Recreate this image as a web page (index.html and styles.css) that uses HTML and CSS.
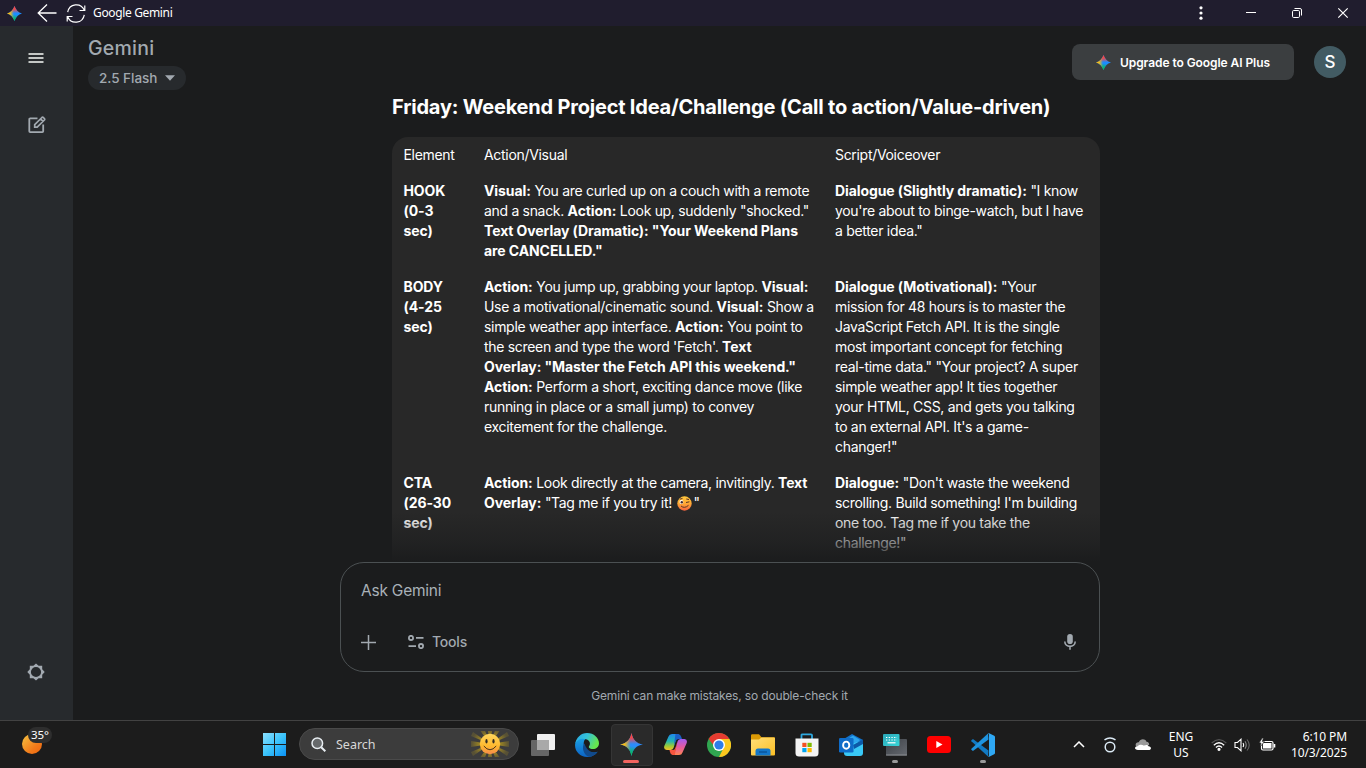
FILE: index.html
```html
<!DOCTYPE html>
<html lang="en">
<head>
<meta charset="utf-8">
<title>Google Gemini</title>
<link rel="stylesheet" href="styles.css">
</head>
<body>
<svg class="defs" width="0" height="0">
  <defs>
    <linearGradient id="spR" x1="0" y1="0" x2="0" y2="1"><stop offset=".2" stop-color="#f94543"/><stop offset=".48" stop-color="#f94543" stop-opacity="0"/></linearGradient>
    <linearGradient id="spY" x1="0" y1="0" x2="1" y2="0"><stop offset=".2" stop-color="#fabc12"/><stop offset=".46" stop-color="#fabc12" stop-opacity="0"/></linearGradient>
    <linearGradient id="spG" x1="0" y1="1" x2=".1" y2="0"><stop offset=".2" stop-color="#08b962"/><stop offset=".48" stop-color="#08b962" stop-opacity="0"/></linearGradient>
    <linearGradient id="win" x1="0" y1="0" x2="1" y2="1"><stop offset="0" stop-color="#8be0ff"/><stop offset=".5" stop-color="#3cc4fb"/><stop offset="1" stop-color="#0a91f5"/></linearGradient>
    <linearGradient id="moon" x1="0" y1="0" x2="1" y2="1"><stop offset="0" stop-color="#f5c542"/><stop offset=".65" stop-color="#f27a1a"/><stop offset="1" stop-color="#ee640c"/></linearGradient>
    <linearGradient id="edA" x1="0" y1="0" x2="1" y2=".4"><stop offset="0" stop-color="#25a7e8"/><stop offset=".5" stop-color="#35c1d8"/><stop offset="1" stop-color="#66e64d"/></linearGradient>
    <linearGradient id="edB" x1="0" y1="0" x2="0" y2="1"><stop offset="0" stop-color="#1ba2e6"/><stop offset="1" stop-color="#0c63c4"/></linearGradient>
    <linearGradient id="coA" x1="0" y1="0" x2="0" y2="1"><stop offset="0" stop-color="#2087ee"/><stop offset=".45" stop-color="#22b6b0"/><stop offset=".75" stop-color="#9ccb35"/><stop offset="1" stop-color="#f5c02a"/></linearGradient>
    <linearGradient id="coB" x1="0" y1="0" x2="0" y2="1"><stop offset="0" stop-color="#a35bf0"/><stop offset=".5" stop-color="#e45a9f"/><stop offset="1" stop-color="#ff8452"/></linearGradient>
    <linearGradient id="fold" x1="0" y1="0" x2="1" y2="1"><stop offset="0" stop-color="#ffdf7a"/><stop offset="1" stop-color="#fcbf24"/></linearGradient>
    <linearGradient id="smile" x1="0" y1="0" x2="0" y2="1"><stop offset="0" stop-color="#ffd75e"/><stop offset=".6" stop-color="#ffb92e"/><stop offset="1" stop-color="#f58a4c"/></linearGradient>
    <linearGradient id="emo" x1="0" y1="0" x2="0" y2="1"><stop offset="0" stop-color="#ffc83d"/><stop offset=".5" stop-color="#ffa834"/><stop offset="1" stop-color="#f4633f"/></linearGradient>
    <linearGradient id="kb" x1="0" y1="0" x2="1" y2="1"><stop offset="0" stop-color="#2ba7b8"/><stop offset="1" stop-color="#37d5d8"/></linearGradient>
    <linearGradient id="kbd" x1="0" y1="0" x2="1" y2="1"><stop offset="0" stop-color="#3c4046"/><stop offset="1" stop-color="#65696f"/></linearGradient>
    <radialGradient id="rays"><stop offset=".45" stop-color="#a88e20"/><stop offset="1" stop-color="#a88e20" stop-opacity=".25"/></radialGradient>
    <symbol id="spark" viewBox="0 0 24 24">
      <path fill="#2b8bfb" d="M12 0C13.200 7 17 10.800 24 12C17 13.200 13.200 17 12 24C10.800 17 7 13.200 0 12C7 10.800 10.800 7 12 0Z"/>
      <path fill="url(#spG)" d="M12 0C13.200 7 17 10.800 24 12C17 13.200 13.200 17 12 24C10.800 17 7 13.200 0 12C7 10.800 10.800 7 12 0Z"/>
      <path fill="url(#spR)" d="M12 0C13.200 7 17 10.800 24 12C17 13.200 13.200 17 12 24C10.800 17 7 13.200 0 12C7 10.800 10.800 7 12 0Z"/>
      <path fill="url(#spY)" d="M12 0C13.200 7 17 10.800 24 12C17 13.200 13.200 17 12 24C10.800 17 7 13.200 0 12C7 10.800 10.800 7 12 0Z"/>
    </symbol>
    <symbol id="spark-bold" viewBox="0 0 24 24">
      <path fill="#1a8cff" d="M12 0C13.800 6 18 10.200 24 12C18 13.800 13.800 18 12 24C10.200 18 6 13.800 0 12C6 10.200 10.200 6 12 0Z"/>
      <path fill="url(#spG)" d="M12 0C13.800 6 18 10.200 24 12C18 13.800 13.800 18 12 24C10.200 18 6 13.800 0 12C6 10.200 10.200 6 12 0Z"/>
      <path fill="url(#spR)" d="M12 0C13.800 6 18 10.200 24 12C18 13.800 13.800 18 12 24C10.200 18 6 13.800 0 12C6 10.200 10.200 6 12 0Z"/>
      <path fill="url(#spY)" d="M12 0C13.800 6 18 10.200 24 12C18 13.800 13.800 18 12 24C10.200 18 6 13.800 0 12C6 10.200 10.200 6 12 0Z"/>
    </symbol>
  </defs>
</svg>

<header class="titlebar">
  <svg class="tb-spark" width="15" height="15"><use href="#spark-bold"/></svg>
  <svg class="tb-back" width="20" height="18" viewBox="0 0 20 18" fill="none" stroke="#fff" stroke-width="1.3"><path d="M10 .5 1.200 9 10 17.500M1.500 9H19.500"/></svg>
  <svg class="tb-reload" width="20" height="19" viewBox="0 0 20 19" fill="none" stroke="#fff" stroke-width="1.2"><path d="M1.700 8.200C3.300 -.7 14.800-1.700 18.200 6M18.800 1.500V6.500H13.500M18.300 10.800C16.700 19.700 5.200 20.700 1.800 13M1.200 17.500V12.500H6.500"/></svg>
  <span class="tb-title">Google Gemini</span>
  <svg class="tb-menu" width="4" height="14" viewBox="0 0 4 14" fill="#fff"><circle cx="2" cy="1.800" r="1.600"/><circle cx="2" cy="7" r="1.600"/><circle cx="2" cy="12.200" r="1.600"/></svg>
  <svg class="tb-btn" width="46" height="26" viewBox="0 0 46 26" stroke="#fff"><path d="M18 12.500H28"/></svg>
  <svg class="tb-btn" width="46" height="26" viewBox="0 0 46 26" fill="none" stroke="#fff"><rect x="18.500" y="10.500" width="7" height="7" rx="1.200"/><path d="M20.500 8.500H26Q27.500 8.500 27.500 10V15.500"/></svg>
  <svg class="tb-btn" width="46" height="26" viewBox="0 0 46 26" stroke="#fff" stroke-width="1.200"><path d="M18.300 8.300 27.700 17.700M27.700 8.300 18.300 17.700"/></svg>
</header>

<div class="app">
  <nav class="rail">
    <svg width="16" height="12" viewBox="0 0 16 12" stroke="#c4c7c5" stroke-width="2"><path d="M.5 2H15.500M.5 6H15.500M.5 10H15.500"/></svg>
    <svg class="compose" width="18" height="18" viewBox="0 0 18 18" fill="none" stroke="#a2a9b0" stroke-width="1.800"><path d="M9.500 2.300H2.200Q1.300 2.300 1.300 3.200V15.300Q1.300 16.200 2.200 16.200H14.300Q15.200 16.200 15.200 15.300V8.500"/><path stroke-width="1.700" d="M6.700 11.200V8.700L13.900 1.500Q14.600.9 15.300 1.500L16.400 2.600Q17 3.300 16.400 4L9.200 11.200ZM12.600 2.900 15 5.300"/></svg>
    <svg class="gear" width="18" height="18" viewBox="0 0 18 18"><path fill="#a2a9b0" fill-rule="evenodd" d="M9 .4 11.600 2.700H15.200V6.300L17.700 9 15.200 11.700V15.300H11.600L9 17.600 6.400 15.300H2.800V11.700L.3 9 2.800 6.300V2.700H6.400ZM9 3.900A5.100 5.100 0 0 0 9 14.100 5.100 5.100 0 0 0 9 3.900Z"/></svg>
  </nav>

  <main class="main">
    <div class="topbar">
      <div class="brand">
        <div class="logo">Gemini</div>
        <div class="model"><span>2.5 Flash</span><svg width="10" height="6" viewBox="0 0 10 6"><path fill="#a2a9b0" d="M0 .3H10L5 5.700Z"/></svg></div>
      </div>
      <div class="upgrade"><svg width="15" height="15"><use href="#spark-bold"/></svg><span>Upgrade to Google AI Plus</span></div>
      <div class="avatar">S</div>
    </div>

    <section class="chat">
      <h3 class="heading">Friday: Weekend Project Idea/Challenge (Call to action/Value-driven)</h3>
      <div class="table">
        <div>Element</div>
        <div>Action/Visual</div>
        <div>Script/Voiceover</div>

        <div><b>HOOK<br>(0-3<br>sec)</b></div>
        <div><b>Visual:</b> You are curled up on a couch with a remote<br>and a snack. <b>Action:</b> Look up, suddenly "shocked."<br><b>Text Overlay (Dramatic): "Your Weekend Plans<br>are CANCELLED."</b></div>
        <div><b>Dialogue (Slightly dramatic):</b> "I know<br>you're about to binge-watch, but I have<br>a better idea."</div>

        <div><b>BODY<br>(4-25<br>sec)</b></div>
        <div><b>Action:</b> You jump up, grabbing your laptop. <b>Visual:</b><br>Use a motivational/cinematic sound. <b>Visual:</b> Show a<br>simple weather app interface. <b>Action:</b> You point to<br>the screen and type the word 'Fetch'. <b>Text<br>Overlay: "Master the Fetch API this weekend."</b><br><b>Action:</b> Perform a short, exciting dance move (like<br>running in place or a small jump) to convey<br>excitement for the challenge.</div>
        <div><b>Dialogue (Motivational):</b> "Your<br>mission for 48 hours is to master the<br>JavaScript Fetch API. It is the single<br>most important concept for fetching<br>real-time data." "Your project? A super<br>simple weather app! It ties together<br>your HTML, CSS, and gets you talking<br>to an external API. It's a game-<br>changer!"</div>

        <div><b>CTA<br>(26-30<br>sec)</b></div>
        <div><b>Action:</b> Look directly at the camera, invitingly. <b>Text<br>Overlay:</b> "Tag me if you try it! <svg class="emoji" width="15" height="15" viewBox="0 0 15 15"><circle cx="7.500" cy="7.500" r="7.200" fill="url(#emo)"/><circle cx="4.400" cy="6" r="1.900" fill="#fff"/><circle cx="4.800" cy="6.200" r="1.200" fill="#402a32"/><path d="M9 6.500 12.400 5.800M2.800 3.200 5.500 2.400M9.300 3 12 3.500M4 10Q7.500 13 11.500 9.300" fill="none" stroke="#593428"/></svg>"</div>
        <div><b>Dialogue:</b> "Don't waste the weekend<br>scrolling. Build something! I'm building<br>one too. Tag me if you take the<br>challenge!"</div>
      </div>
      <div class="fade"></div>
    </section>

    <div class="composer">
      <div class="prompt">Ask Gemini</div>
      <div class="tools">
        <svg width="15" height="15" viewBox="0 0 15 15" stroke="#a2a9b0" stroke-width="1.500"><path d="M7.500 0V15M0 7.500H15"/></svg>
        <svg class="tune" width="16" height="14" viewBox="0 0 16 14" fill="none" stroke="#a2a9b0" stroke-width="1.800"><circle cx="3" cy="2.900" r="2.100"/><path d="M8 2.900H15.500M.5 11.100H8"/><circle cx="13" cy="11.100" r="2.100"/></svg>
        <span>Tools</span>
        <svg class="mic" width="12" height="16" viewBox="0 0 12 16"><rect x="3.200" y="0" width="5.600" height="10" rx="2.800" fill="#a2a9b0"/><path d="M.8 7.500C.8 14 11.200 14 11.200 7.500M6 12.300V15.800" fill="none" stroke="#a2a9b0" stroke-width="1.600"/></svg>
      </div>
    </div>
    <p class="note">Gemini can make mistakes, so double-check it</p>
  </main>
</div>

<footer class="taskbar">
  <div class="weather"><svg width="20" height="20" viewBox="0 0 20 20"><circle cx="10" cy="10" r="10" fill="url(#moon)"/></svg><span class="temp">35°</span></div>
  <div class="cell"><svg width="23" height="23" viewBox="0 0 23 23" fill="url(#win)"><path d="M0 0H11V11H0ZM12 0H23V11H12ZM0 12H11V23H0ZM12 12H23V23H12Z"/></svg></div>
  <div class="search">
    <svg width="15" height="15" viewBox="0 0 15 15" fill="#66696b" stroke="#e8eef2" stroke-width="1.500"><circle cx="6.300" cy="6.300" r="5.300"/><path d="M10.200 10.200 14.300 14.300" stroke-width="2"/></svg>
    <span>Search</span>
    <svg class="sun" width="38" height="26" viewBox="0 1 38 26"><path fill="url(#rays)" d="M19 14 16.500-2H21.500ZM19 14 25-2 30-1ZM19 14 36 2 38 6ZM19 14 38 11V17ZM19 14 38 22 36 26ZM19 14 30 29 25 30ZM19 14 21.500 30H16.500ZM19 14 13 30 8 29ZM19 14 2 26 0 22ZM19 14 0 17V11ZM19 14 0 6 2 2ZM19 14 8-1 13-2Z"/><circle cx="19" cy="14" r="10.200" fill="url(#smile)"/><ellipse cx="15.500" cy="11.200" rx="1.100" ry="2.200" fill="#332b20"/><ellipse cx="22.500" cy="11.200" rx="1.100" ry="2.200" fill="#332b20"/><path d="M12.800 16Q19 23.500 25.200 16" fill="none" stroke="#4a3518"/></svg>
  </div>
  <div class="cell"><svg width="24" height="22" viewBox="0 0 24 22"><rect x="6" width="18" height="16" rx="1" fill="#f0f0f0"/><rect y="6" width="18" height="16" rx="1" fill="#666"/><rect x="6" y="6" width="12" height="10" fill="#a9a9a9"/></svg></div>
  <div class="cell"><svg width="24" height="24" viewBox="0 0 24 24"><path fill="url(#edB)" d="M.1 11.500C1 5 7 3.500 11 5.500C7 8 7.500 19 18 19.500 20 19.500 22 18.500 22.500 18.700 20 22.500 16 24 12 24 5 24-.5 18 .1 11.500Z"/><path fill="#114a8c" d="M9.500 10.500C6 14 9 22.500 14 23.800 18 23.500 21.300 21 22.700 18.800 17 21 11.500 17.500 9.500 10.500Z"/><path fill="url(#edA)" d="M.1 11.500C1 4.500 6 0 12 0 19 0 24 5 24 10.200 24 14 21 16 18 16 14 16 13.500 14.300 14 13.300 15.500 11.500 15.500 8.200 12 6.500 7.500 4.500 1.500 6 .1 11.500Z"/></svg></div>
  <div class="cell active"><svg width="23" height="23"><use href="#spark"/></svg><i></i></div>
  <div class="cell"><svg width="23" height="21" viewBox="0 0 23 21"><path fill="url(#coA)" d="M4.500 2.500Q5.300 0 8 0H14.500L12 6 9.500 14Q8.700 16 6.500 16H2.800Q-.7 15.500.3 12Z"/><path fill="#1b5fc6" d="M11.500 0H14.500Q16.500.3 17.300 3L18 5H14.500Q12.300 5 11.300 8L9.800 12Z"/><path fill="url(#coB)" d="M18.500 18.500Q17.700 21 15 21H10L12 13 13.500 7.500Q14.200 5 16.500 5H20.500Q23.700 5.500 22.700 9Z"/><path fill="#f7553e" d="M5.500 16H9Q10.700 16 11.500 13.500L13.200 8 10.800 21H8.500Q6.500 20.700 5.800 17.500Z"/></svg></div>
  <div class="cell"><svg width="24" height="24" viewBox="0 0 24 24"><circle cx="12" cy="12" r="12" fill="#30a650"/><path fill="#e53b30" d="M1.600 6A12 12 0 0 1 22.400 6H12L7.500 13.500Z"/><path fill="#fcc81f" d="M22.400 6A12 12 0 0 1 12 24L17 14 16.500 9 12 6Z"/><circle cx="12" cy="12" r="6" fill="#fff"/><circle cx="12" cy="12" r="4.600" fill="#2f7de8"/></svg></div>
  <div class="cell"><svg width="24" height="22" viewBox="0 0 24 22"><path fill="#dc9a05" d="M0 1.500Q0 .3 1.200.3H8L10.500 3.300H23Q24 3.300 24 4.500V10H0Z"/><path fill="url(#fold)" d="M0 5.500H8L10.500 3.500H23Q24 3.500 24 4.500V20.500Q24 21.500 23 21.500H1Q0 21.500 0 20.500Z"/><path fill="#1377c9" d="M4.500 21.500V17Q4.500 14.500 7 14.500H17Q19.500 14.500 19.500 17V21.500Z"/><path d="M8 18H16" stroke="#0a4f93" stroke-width="1.300"/></svg></div>
  <div class="cell"><svg width="24" height="24" viewBox="0 0 24 24"><path d="M6.500 7V2.200Q6.500 1.300 7.500 1.300H16Q17 1.300 17 2.200V7" fill="none" stroke="#2ea9e0" stroke-width="1.800"/><path fill="#f4f4f4" d="M.5 5.500H23.500V20Q23.500 23.500 20 23.500H4Q.5 23.500.5 20Z"/><path fill="#f25022" d="M7.300 9.800H11.500V14H7.300Z"/><path fill="#7fba00" d="M12.500 9.800H16.700V14H12.500Z"/><path fill="#00a4ef" d="M7.300 15H11.500V19.200H7.300Z"/><path fill="#ffb900" d="M12.500 15H16.700V19.200H12.500Z"/></svg></div>
  <div class="cell"><svg width="24" height="22" viewBox="0 0 24 22"><path fill="#1272c9" d="M4 5.500 13 0 24 6V12H4Z"/><path fill="#2da5ed" d="M7 6 14 1.500 21 6 14 13Z"/><path fill="#39c9f6" d="M5 12 24 6.500V19Q24 22 21 22H8Q5 22 5 19Z"/><path fill="#0c59a8" d="M14 11 24 5.500V10L15 15Z"/><rect y="4" width="14.500" height="14.500" rx="1.300" fill="#0f6cc8"/><ellipse cx="7.200" cy="11.200" rx="3.100" ry="3.600" fill="none" stroke="#fff" stroke-width="1.900"/></svg></div>
  <div class="cell run"><svg width="24" height="22" viewBox="0 0 24 22"><rect x="3" y="5" width="21" height="16.500" rx="1" fill="url(#kbd)"/><path d="M3 21H24" stroke="#8a8d91"/><rect width="16.500" height="12" rx="1" fill="url(#kb)"/><path d="M3 3.500H14M3 6H14" stroke="#fff" stroke-width="1.200" stroke-dasharray="1.300 1.400"/><path d="M4.500 8.800H12.500" stroke="#fff" stroke-width="1.200"/></svg><i></i></div>
  <div class="cell"><svg width="24" height="17" viewBox="0 0 24 17"><rect width="24" height="17" rx="3.500" fill="#fe0000"/><path fill="#fff" d="M9.300 5 15.500 8.500 9.300 12Z"/></svg></div>
  <div class="cell run"><svg width="24" height="24" viewBox="0 0 24 24"><path fill="#1279c2" d="M17.500 17.500 2.300 6.300Q1.700 6 1.200 6.400L.4 7.200Q0 7.800.4 8.300L17 23.500Z"/><path fill="#1e93df" d="M17.500 6.500 2.300 17.700Q1.700 18 1.200 17.600L.4 16.800Q0 16.200.4 15.700L17 .5Z"/><path fill="#2fa8f4" d="M17 .3Q17.500 0 18.200.3L23.200 2.700Q24 3.200 24 4V20Q24 20.800 23.200 21.300L18.200 23.700Q17.500 24 17 23.700Q18 23.300 18 22V2Q18 .7 17 .3Z"/></svg><i></i></div>

  <div class="tray">
    <svg class="t1" width="12" height="7" viewBox="0 0 12 7" fill="none" stroke="#fff" stroke-width="1.500"><path d="M1 6 6 1 11 6"/></svg>
    <svg class="t2" width="14" height="16" viewBox="0 0 14 16" fill="none" stroke="#dceaf5" stroke-width="1.500"><circle cx="7" cy="10" r="4.800"/><path d="M1.500 2.800Q7-.8 12.500 2.800"/></svg>
    <svg class="t3" width="16" height="11" viewBox="0 0 16 11"><path fill="#9a9a9a" d="M2 8C-.8 6 1.200 2.800 3.800 3.300 5-.3 10-.8 11.500 2.800 14 3 14.500 5 14 6Z"/><path fill="#fff" d="M3 11C-.8 11-1 7.300 2.600 7.200 4.500 5.400 7.200 5.600 8.600 6.600 11 5.500 13.300 6 13.500 7.200 17 7.500 16.500 11 13.600 11Z"/></svg>
    <div class="lang">ENG<br>US</div>
    <svg class="t4" width="16" height="12" viewBox="0 0 16 12" fill="none" stroke="#fff" stroke-width="1.200"><path d="M.7 4Q8-2.700 15.300 4" stroke="#555"/><path d="M2.800 6.300Q8 1.200 13.200 6.300M4.900 8.500Q8 5.500 11.100 8.500"/><circle cx="8" cy="10.300" r="1" fill="#fff"/></svg>
    <svg class="t5" width="17" height="14" viewBox="0 0 17 14" fill="none" stroke="#fff" stroke-width="1.100"><path d="M1 4.500H3.500L7 1.200V12.800L3.500 9.500H1ZM9 5Q10.300 7 9 9"/><path d="M11 3.300Q13.500 7 11 10.700" stroke="#888"/><path d="M13 1.500Q17.500 7 13 12.500" stroke="#666"/></svg>
    <svg class="t6" width="17" height="13" viewBox="0 0 17 13"><rect x="2.500" y="3.500" width="11.500" height="8.500" rx="1.500" fill="none" stroke="#fff" stroke-width="1.200"/><rect x="4" y="5" width="8.500" height="5.500" fill="#fff"/><path d="M15.500 6V9.500" stroke="#fff" stroke-width="1.600"/><path fill="#fff" stroke="#1c1c1c" stroke-width=".7" d="M3.200 0 0 5H2L1 9 5.500 3.600H3.300L4.500 0Z"/></svg>
    <div class="clock">6:10 PM<br>10/3/2025</div>
  </div>
</footer>
</body>
</html>
```

FILE: styles.css
```css
* { box-sizing: border-box; }
html, body { margin: 0; height: 100%; }
body {
  display: flex;
  flex-direction: column;
  width: 1366px;
  height: 768px;
  overflow: hidden;
  background: #1b1c1d;
  color: #fff;
  font-family: Inter, "Liberation Sans", sans-serif;
}
svg { display: block; flex: none; }
.defs { position: absolute; }

.titlebar {
  display: flex;
  align-items: center;
  flex: none;
  height: 26px;
  padding-left: 7px;
  background: #201d2e;
  font: 12px/26px "Noto Sans", sans-serif;
}
.tb-back { margin-left: 15px; }
.tb-reload { margin-left: 9px; }
.tb-title { margin-left: 7px; letter-spacing: -0.35px; }
.tb-menu { margin: 0 25px 0 auto; }

.app { display: flex; flex: none; height: 694px; }
.rail {
  display: flex;
  flex-direction: column;
  align-items: center;
  flex: none;
  width: 73px;
  padding: 26px 1px 39px 0;
  background: #272a2d;
}
.compose { margin: 52px 0 0 1px; }
.gear { margin-top: auto; }

.main { display: flex; flex-direction: column; flex: 1; }
.topbar {
  display: flex;
  flex: none;
  height: 64px;
  padding: 9px 20px 0 15px;
}
.brand { flex: 1; }
.logo {
  padding-top: 1px;
  color: #a2a9b0;
  font: 500 19.5px/24px Inter, sans-serif;
  letter-spacing: 0.25px;
}
.model {
  display: flex;
  align-items: center;
  gap: 8px;
  width: 98px;
  height: 24px;
  margin-top: 6px;
  padding-left: 11px;
  border-radius: 12px;
  background: #272a2d;
  color: #a2a9b0;
  font-size: 13.5px;
  font-weight: 500;
  letter-spacing: -0.03px;
}
.upgrade {
  display: flex;
  align-items: center;
  gap: 9px;
  width: 222px;
  height: 36px;
  margin-top: 9px;
  padding-left: 24px;
  border-radius: 8px;
  background: #3b3e40;
  font-size: 12px;
  font-weight: 600;
  letter-spacing: -0.07px;
  white-space: nowrap;
}
.avatar {
  width: 32px;
  height: 32px;
  margin: 11px 0 0 20px;
  border-radius: 50%;
  background: #425b63;
  font: 500 17px/32px Inter, sans-serif;
  text-align: center;
}

.chat {
  position: relative;
  flex: none;
  height: 472px;
  padding-left: 319px;
  overflow: hidden;
}
.heading {
  margin: 0 0 15px;
  padding-top: 2px;
  font-size: 20px;
  font-weight: 700;
  line-height: 30px;
  letter-spacing: -0.21px;
  white-space: nowrap;
}
.table {
  display: grid;
  grid-template-columns: 80.5px 351px 265px;
  width: 708px;
  height: 460px;
  align-content: start;
  padding-left: 11.5px;
  border-radius: 16px;
  background: #282828;
  font-size: 14px;
  line-height: 20px;
  letter-spacing: -0.31px;
  white-space: nowrap;
}
.table > div { padding: 8px 0; }
.table b { font-weight: 700; letter-spacing: -0.09px; }
.emoji { display: inline-block; margin: 0 2px 0 1px; vertical-align: -3px; }
.fade {
  position: absolute;
  left: 0;
  right: 0;
  bottom: 0;
  height: 50px;
  background: linear-gradient(rgba(27, 28, 29, 0), rgba(27, 28, 29, 0.52) 62%, #1b1c1d 100%);
}

.composer {
  flex: none;
  width: 760px;
  height: 110px;
  margin-left: 267px;
  padding: 16px 23px 0 20px;
  border: 1px solid #4b5052;
  border-radius: 24px;
  color: #a2a9b0;
}
.prompt { font-size: 15.5px; line-height: 24px; letter-spacing: -0.23px; color: #a9b1b8; }
.tools {
  display: flex;
  align-items: center;
  height: 20px;
  margin-top: 29px;
  font-size: 14px;
  font-weight: 500;
  letter-spacing: -0.2px;
}
.tools span { line-height: 18px; padding-bottom: 1px; }
.tune { margin: 0 8px 0 32px; }
.mic { margin-left: auto; }
.note {
  margin: 16px 0 0;
  color: #a2a9b0;
  font-size: 12px;
  line-height: 16px;
  letter-spacing: -0.16px;
  text-align: center;
}

.taskbar {
  display: flex;
  flex: none;
  height: 48px;
  border-top: 1px solid #424242;
  background: #1c1c1c;
  font-family: "Noto Sans", sans-serif;
  font-size: 12px;
}
.weather { position: relative; flex: none; width: 252px; padding: 13px 0 0 22px; }
.temp {
  position: absolute;
  left: 28px;
  top: 6px;
  width: 24px;
  height: 16px;
  border-radius: 8px;
  background: #2e2e2e;
  font-size: 11.5px;
  line-height: 16px;
  text-align: center;
}
.cell {
  position: relative;
  display: flex;
  align-items: center;
  justify-content: center;
  flex: none;
  width: 44px;
  height: 47px;
}
.search {
  display: flex;
  align-items: center;
  flex: none;
  width: 220px;
  height: 32px;
  margin: 7px 2px 0 3px;
  padding: 0 9px 0 11px;
  border: 1px solid #4a4a4a;
  border-radius: 16px;
  background: #3c3c3c;
  color: #d8d8d8;
}
.search span { margin-left: 10px; font-size: 12.5px; }
.sun { margin-left: auto; }
.active::before {
  content: "";
  position: absolute;
  left: 2px;
  top: 3px;
  width: 40px;
  height: 40px;
  border: 1px solid #353535;
  border-radius: 4px;
  background: #2a2a2a;
}
.active svg { position: relative; }
.cell i {
  position: absolute;
  left: 19px;
  bottom: 5px;
  width: 6px;
  height: 3px;
  border-radius: 2px;
  background: #9a9a9a;
}
.active i { left: 14px; width: 16px; background: #f2645f; }

.tray { display: flex; align-items: center; margin-left: auto; padding-right: 19px; height: 47px; }
.t2 { margin-left: 18px; }
.t3 { margin-left: 18px; }
.lang { width: 46px; margin-left: 7px; line-height: 16px; text-align: center; }
.t4 { margin-left: 7px; }
.t5 { margin-left: 7px; }
.t6 { margin-left: 8px; }
.clock { width: 71px; line-height: 16px; text-align: right; white-space: nowrap; letter-spacing: -0.1px; }
```
